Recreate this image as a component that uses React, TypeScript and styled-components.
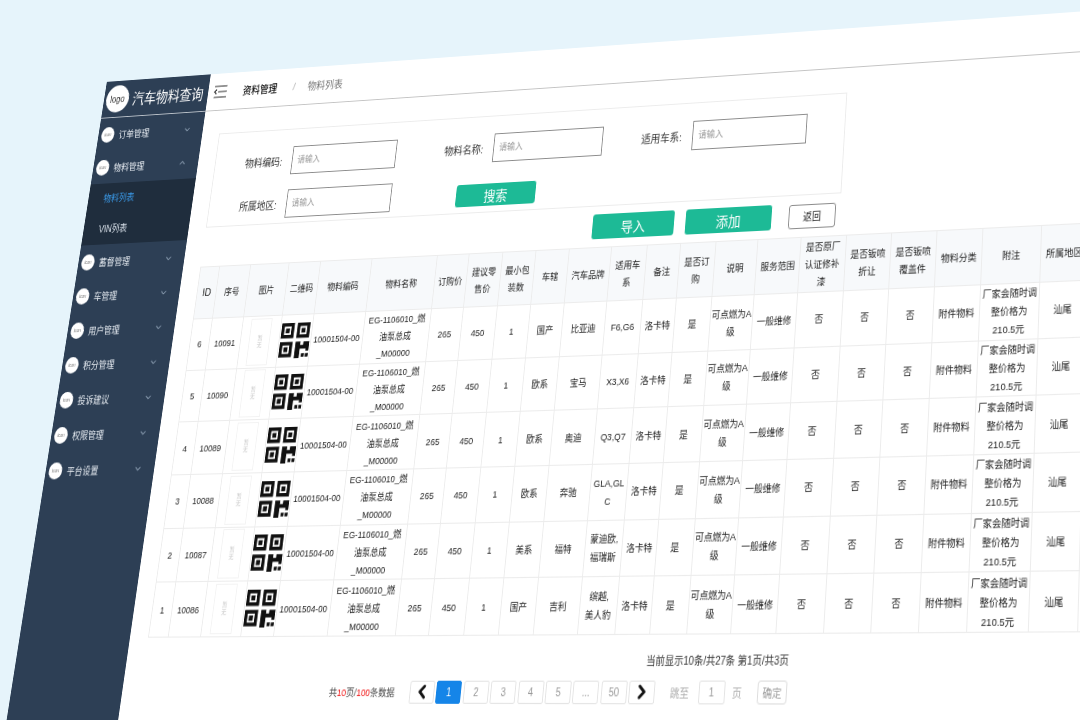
import React from 'react';
import styled, { createGlobalStyle } from 'styled-components';
import { ChevronDown, ChevronUp, ChevronLeft, ChevronRight } from 'lucide-react';

/* The whole application is one flat page; this projects it onto the tilted screen in the picture. */
const anchorRect = { x: 158.5, y: 208, w: 970, h: 370 };
const anchorQuad = [[200, 266.7], [1040.7, 225], [1027.3, 631.5], [147.7, 636.7]];

function projection(): string {
  const [[x0, y0], [x1, y1], [x2, y2], [x3, y3]] = anchorQuad;
  const dx1 = x1 - x2, dx2 = x3 - x2, sx = x0 - x1 + x2 - x3;
  const dy1 = y1 - y2, dy2 = y3 - y2, sy = y0 - y1 + y2 - y3;
  const det = dx1 * dy2 - dx2 * dy1;
  const g = (sx * dy2 - dx2 * sy) / det;
  const h = (dx1 * sy - sx * dy1) / det;
  const a = x1 - x0 + g * x1, b = x3 - x0 + h * x3;
  const d = y1 - y0 + g * y1, e = y3 - y0 + h * y3;
  const { x, y, w, h: rh } = anchorRect;
  const i = 1 - (g * x) / w - (h * y) / rh;
  const m = [
    a / w, d / w, 0, g / w,
    b / rh, e / rh, 0, h / rh,
    0, 0, 1, 0,
    x0 - (a * x) / w - (b * y) / rh, y0 - (d * x) / w - (e * y) / rh, 0, i,
  ].map((v, idx) => (idx === 10 ? v : v / i));
  return `matrix3d(${m.join(',')})`;
}

const Global = createGlobalStyle`
  html, body { margin: 0; padding: 0; background: #e6f4fb; }
  body { font-family: "Liberation Sans", "Noto Sans CJK SC", sans-serif; }
  * { box-sizing: border-box; }
`;

const Scene = styled.div`
  width: 1080px;
  height: 720px;
  overflow: hidden;
  background: #e6f4fb;
`;

const Page = styled.div`
  display: flex;
  width: 1400px;
  height: 900px;
  background: #fff;
  transform-origin: 0 0;
  transform: ${projection()};
  filter: blur(0.35px);
  color: #2a2a2a;
`;

const Sidebar = styled.aside`
  flex: 0 0 137px;
  background: #2d3f55;
  color: #e8edf3;
`;

const Brand = styled.div`
  display: flex;
  align-items: center;
  height: 41px;
  padding-left: 3px;
  gap: 5px;
  border-bottom: 1px solid #b9c0c8;
  font-size: 15.5px;
  color: #fff;
  white-space: nowrap;
`;

const LogoMark = styled.span`
  flex: 0 0 30px;
  height: 30px;
  border-radius: 50%;
  background: #fff;
  color: #333;
  font-size: 10px;
  display: flex;
  align-items: center;
  justify-content: center;
`;

const MenuItem = styled.div`
  display: flex;
  align-items: center;
  height: 36px;
  padding: 0 15px 0 4px;
  font-size: 10px;
  gap: 6px;
`;

const ItemDot = styled.span`
  flex: 0 0 17px;
  height: 17px;
  border-radius: 50%;
  background: #fff;
  color: #777;
  font-size: 5px;
  display: flex;
  align-items: center;
  justify-content: center;
`;

const ItemChevron = styled.span`
  margin-left: auto;
  display: flex;
  color: #8fa1b5;
`;

const SubMenu = styled.div`
  background: #1f2d3d;
`;

const SubItem = styled.div<{ $active?: boolean }>`
  height: 33px;
  line-height: 33px;
  padding-left: 20px;
  font-size: 10px;
  color: ${(p) => (p.$active ? '#3b9cec' : '#dbe3ec')};
`;

const Main = styled.main`
  flex: 1;
  min-width: 0;
`;

const TopBar = styled.header`
  display: flex;
  align-items: center;
  height: 41px;
  padding-left: 7px;
  border-bottom: 1px solid #c4c4c4;
  font-size: 11px;
`;

const Crumb = styled.span<{ $current?: boolean }>`
  color: ${(p) => (p.$current ? '#777' : '#111')};
  font-weight: ${(p) => (p.$current ? 400 : 500)};
`;

const CrumbSep = styled.span`
  margin: 0 16px 0 20px;
  color: #aaa;
`;

const Toggle = styled.svg`
  width: 18px;
  height: 14px;
  margin-right: 20px;
`;

const Content = styled.div`
  padding: 25px 0 0 22px;
`;

const FilterPanel = styled.section`
  display: grid;
  grid-template-columns: 248px 234px 1fr;
  grid-auto-rows: 30px;
  row-gap: 16px;
  width: 753px;
  height: 101px;
  padding-top: 18px;
  border: 1px solid #ececec;
`;

const Field = styled.label`
  display: flex;
  align-items: center;
  font-size: 11px;
  color: #333;
`;

const FieldLabel = styled.span`
  flex: 0 0 85px;
  margin-right: 12px;
  text-align: right;
  white-space: nowrap;
`;

const TextBox = styled.div`
  flex: 0 0 130px;
  height: 30px;
  padding-left: 6px;
  border: 1px solid #8c8c8c;
  line-height: 28px;
  font-size: 9.5px;
  color: #999;
`;

const SearchButton = styled.button`
  align-self: end;
  justify-self: start;
  width: 95px;
  height: 23px;
  margin: 0 0 1px 58px;
  border: 0;
  border-radius: 3px;
  background: #1dba96;
  color: #fff;
  font: inherit;
  font-size: 14px;
`;

const Actions = styled.div`
  display: flex;
  justify-content: flex-end;
  align-items: center;
  width: 753px;
  height: 25px;
  margin: 8px 0;
  padding-right: 5px;
`;

const GreenButton = styled.button<{ $w: number; $gap: number }>`
  width: ${(p) => p.$w}px;
  height: 25px;
  margin-right: ${(p) => p.$gap}px;
  border: 0;
  border-radius: 3px;
  background: #1dba96;
  color: #fff;
  font: inherit;
  font-size: 14px;
`;

const BackButton = styled.button`
  width: 52px;
  height: 24px;
  border: 1px solid #8c8c8c;
  border-radius: 3px;
  background: #fff;
  color: #222;
  font: inherit;
  font-size: 10px;
`;

const Table = styled.table`
  width: 1079px;
  table-layout: fixed;
  border-collapse: collapse;
  font-size: 9.5px;
  line-height: 17px;
  text-align: center;
`;

const Col = styled.col<{ $w: number }>`
  width: ${(p) => p.$w}px;
`;

const HeadCell = styled.th`
  height: 54px;
  padding: 0;
  border: 1px solid #ececec;
  background: #f7f9fb;
  font-weight: 400;
  color: #222;
  white-space: pre-line;
  &:first-child {
    font-size: 11px;
  }
`;

const Cell = styled.td`
  height: 52.67px;
  padding: 0;
  border: 1px solid #ececec;
  color: #222;
  white-space: pre-line;
`;

const ImageSlot = styled.div`
  width: 26px;
  height: 48px;
  margin: 0 auto;
  border: 1px solid #f3f3f3;
  display: flex;
  align-items: center;
  justify-content: center;
  font-size: 6px;
  line-height: 7px;
  color: #c8c8c8;
`;

const QrCode = styled.svg`
  display: block;
  width: 36px;
  height: 36px;
  margin: 0 auto;
  fill: #111;
`;

const Footer = styled.div`
  display: flex;
  flex-direction: column;
  align-items: flex-end;
  width: 727px;
  padding-top: 17px;
`;

const Status = styled.div`
  font-size: 10px;
  line-height: 14px;
  color: #333;
`;

const Pager = styled.nav`
  display: flex;
  align-items: center;
  height: 21px;
  margin-top: 10px;
  font-size: 10px;
`;

const TotalText = styled.span`
  margin-right: 17px;
  font-size: 9.4px;
  color: #444;
`;

const Red = styled.span`
  color: #f01414;
`;

const PageButton = styled.span<{ $active?: boolean; $arrow?: boolean }>`
  display: flex;
  align-items: center;
  justify-content: center;
  width: 28px;
  height: 21px;
  margin-right: 2.4px;
  border: 1px solid ${(p) => (p.$active ? '#1585e8' : '#e4e4e4')};
  border-radius: 2px;
  background: ${(p) => (p.$active ? '#1585e8' : '#fff')};
  color: ${(p) => (p.$active ? '#fff' : p.$arrow ? '#111' : '#999')};
`;

const PagerText = styled.span<{ $left: number }>`
  margin-left: ${(p) => p.$left}px;
  color: #aaa;
`;

const JumpBox = styled.span`
  display: flex;
  align-items: center;
  justify-content: center;
  width: 28px;
  height: 21px;
  margin-left: 10px;
  border: 1px solid #e4e4e4;
  border-radius: 2px;
  color: #999;
`;

const ConfirmButton = styled(JumpBox)`
  width: 31px;
  margin-left: 16.5px;
  border-color: #ddd;
  border-radius: 3px;
`;

const widths = [24.4, 38.6, 48, 39, 62.6, 79, 38.4, 40, 39, 39, 49, 41, 38, 40, 47, 48, 50, 49, 49, 49, 62, 49, 60];

const heads = ['ID', '序号', '图片', '二维码', '物料编码', '物料名称', '订购价', '建议零\n售价', '最小包\n装数', '车辖', '汽车品牌', '适用车\n系', '备注', '是否订\n购', '说明', '服务范围', '是否原厂\n认证修补\n漆', '是否钣喷\n折让', '是否钣喷\n覆盖件', '物料分类', '附注', '所属地区', ''];

const rows = [
  { id: 6, no: 10091, area: '国产', brand: '比亚迪', series: 'F6,G6' },
  { id: 5, no: 10090, area: '欧系', brand: '宝马', series: 'X3,X6' },
  { id: 4, no: 10089, area: '欧系', brand: '奥迪', series: 'Q3,Q7' },
  { id: 3, no: 10088, area: '欧系', brand: '奔驰', series: 'GLA,GL\nC' },
  { id: 2, no: 10087, area: '美系', brand: '福特', series: '蒙迪欧,\n福瑞斯' },
  { id: 1, no: 10086, area: '国产', brand: '吉利', series: '缤越,\n美人豹' },
];

const menuTop = ['蓄督管理', '车管理', '用户管理', '积分管理', '投诉建议', '权限管理', '平台设置'];

const Finder = ({ x, y }: { x: number; y: number }) => (
  <path fillRule="evenodd" d={`M${x} ${y}h13v13h-13z M${x + 3} ${y + 3}v7h7v-7z M${x + 4.5} ${y + 4.5}h4v4h-4z`} />
);

const Qr = () => (
  <QrCode viewBox="0 0 30 30">
    <Finder x={0} y={0} />
    <Finder x={16} y={0} />
    <Finder x={0} y={16} />
    <path d="M16 16h5v3h3v-3h6v8h-3v-2h-6v8h-5z" />
    <rect x={23} y={26} width={3} height={3} />
    <rect x={27} y={26} width={3} height={3} />
  </QrCode>
);

const Item = ({ label, open }: { label: string; open?: boolean }) => (
  <MenuItem>
    <ItemDot>icon</ItemDot>
    {label}
    <ItemChevron>{open ? <ChevronUp size={11} /> : <ChevronDown size={11} />}</ItemChevron>
  </MenuItem>
);

export default function App() {
  return (
    <Scene>
      <Global />
      <Page>
        <Sidebar>
          <Brand>
            <LogoMark>logo</LogoMark>
            汽车物料查询
          </Brand>
          <Item label="订单管理" />
          <Item label="物料管理" open />
          <SubMenu>
            <SubItem $active>物料列表</SubItem>
            <SubItem>VIN列表</SubItem>
          </SubMenu>
          {menuTop.map((m) => (
            <Item key={m} label={m} />
          ))}
        </Sidebar>
        <Main>
          <TopBar>
            <Toggle viewBox="0 0 18 14" fill="none" stroke="#222" strokeWidth="1.2">
              <path d="M1 1h16M6 7h11M1 13h16M4 4.5L1.5 7 4 9.5" />
            </Toggle>
            <Crumb>资料管理</Crumb>
            <CrumbSep>/</CrumbSep>
            <Crumb $current>物料列表</Crumb>
          </TopBar>
          <Content>
            <FilterPanel>
              <Field>
                <FieldLabel>物料编码:</FieldLabel>
                <TextBox>请输入</TextBox>
              </Field>
              <Field>
                <FieldLabel>物料名称:</FieldLabel>
                <TextBox>请输入</TextBox>
              </Field>
              <Field>
                <FieldLabel>适用车系:</FieldLabel>
                <TextBox>请输入</TextBox>
              </Field>
              <Field>
                <FieldLabel>所属地区:</FieldLabel>
                <TextBox>请输入</TextBox>
              </Field>
              <SearchButton>搜索</SearchButton>
            </FilterPanel>
            <Actions>
              <GreenButton $w={94} $gap={13}>导入</GreenButton>
              <GreenButton $w={97} $gap={19}>添加</GreenButton>
              <BackButton>返回</BackButton>
            </Actions>
            <Table>
              <colgroup>
                {widths.map((w, i) => (
                  <Col key={i} $w={w} />
                ))}
              </colgroup>
              <thead>
                <tr>
                  {heads.map((h, i) => (
                    <HeadCell key={i}>{h}</HeadCell>
                  ))}
                </tr>
              </thead>
              <tbody>
                {rows.map((r) => (
                  <tr key={r.id}>
                    <Cell>{r.id}</Cell>
                    <Cell>{r.no}</Cell>
                    <Cell><ImageSlot>暂<br />无</ImageSlot></Cell>
                    <Cell><Qr /></Cell>
                    <Cell>10001504-00</Cell>
                    <Cell>{'EG-1106010_燃\n油泵总成\n_M00000'}</Cell>
                    <Cell>265</Cell>
                    <Cell>450</Cell>
                    <Cell>1</Cell>
                    <Cell>{r.area}</Cell>
                    <Cell>{r.brand}</Cell>
                    <Cell>{r.series}</Cell>
                    <Cell>洛卡特</Cell>
                    <Cell>是</Cell>
                    <Cell>{'可点燃为A\n级'}</Cell>
                    <Cell>一般维修</Cell>
                    <Cell>否</Cell>
                    <Cell>否</Cell>
                    <Cell>否</Cell>
                    <Cell>附件物料</Cell>
                    <Cell>{'厂家会随时调\n整价格为\n210.5元'}</Cell>
                    <Cell>汕尾</Cell>
                    <Cell />
                  </tr>
                ))}
              </tbody>
            </Table>
            <Footer>
              <Status>当前显示10条/共27条 第1页/共3页</Status>
              <Pager>
                <TotalText>共<Red>10</Red>页/<Red>100</Red>条数据</TotalText>
                <PageButton $arrow><ChevronLeft size={20} strokeWidth={3.5} /></PageButton>
                <PageButton $active>1</PageButton>
                <PageButton>2</PageButton>
                <PageButton>3</PageButton>
                <PageButton>4</PageButton>
                <PageButton>5</PageButton>
                <PageButton>...</PageButton>
                <PageButton>50</PageButton>
                <PageButton $arrow><ChevronRight size={20} strokeWidth={3.5} /></PageButton>
                <PagerText $left={14}>跳至</PagerText>
                <JumpBox>1</JumpBox>
                <PagerText $left={8}>页</PagerText>
                <ConfirmButton>确定</ConfirmButton>
              </Pager>
            </Footer>
          </Content>
        </Main>
      </Page>
    </Scene>
  );
}
